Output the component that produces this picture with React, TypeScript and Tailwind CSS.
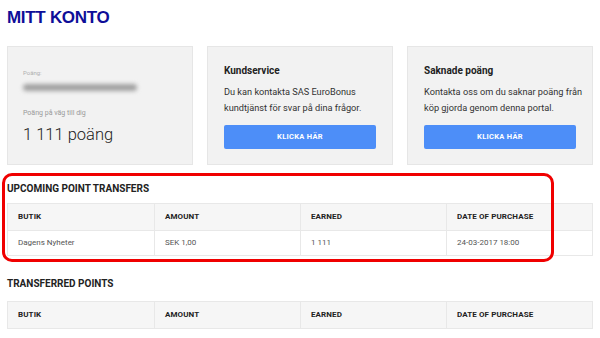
import React from "react";

const font = { fontFamily: 'Roboto, "Noto Sans", sans-serif' };

function Table({ rows }: { rows: string[][] }) {
  const cols = ["BUTIK", "AMOUNT", "EARNED", "DATE OF PURCHASE"];
  return (
    <div className="border border-[#e8e8e8]">
      <div className="grid grid-cols-4 bg-[#f6f6f6] h-[26px]">
        {cols.map((c, i) => (
          <div
            key={c}
            className={`flex items-center pl-[10px] text-[8px] font-bold text-[#222] tracking-[0.1px] ${i > 0 ? "border-l border-[#e8e8e8]" : ""}`}
          >
            {c}
          </div>
        ))}
      </div>
      {rows.map((r, ri) => (
        <div key={ri} className="grid grid-cols-4 bg-white h-[25px] border-t border-[#e8e8e8]">
          {r.map((c, i) => (
            <div
              key={i}
              className={`flex items-center pl-[10px] text-[8px] text-[#555] ${i > 0 ? "border-l border-[#e8e8e8]" : ""}`}
            >
              {c}
            </div>
          ))}
        </div>
      ))}
    </div>
  );
}

function InfoCard({ title, lines }: { title: string; lines: string[] }) {
  return (
    <div className="bg-[#f2f2f2] border border-[#e6e6e6] h-[119px] px-[16px] pt-[17px]">
      <div className="text-[10px] font-bold text-[#222] leading-[14px]">{title}</div>
      <div className="mt-[6px] text-[9.2px] text-[#333] leading-[16px] whitespace-nowrap">
        {lines.map((l) => (
          <div key={l}>{l}</div>
        ))}
      </div>
      <div className="mt-[9px] h-[24px] rounded-[2px] bg-[#4d8ef8] flex items-center justify-center text-white text-[7.5px] font-bold tracking-[0.3px]">
        KLICKA HÄR
      </div>
    </div>
  );
}

export default function App() {
  return (
    <div className="relative w-[600px] h-[338px] bg-white overflow-hidden px-[7px]" style={font}>
      <div className="pt-[8px] h-[46px]">
        <div
          className="text-[17px] leading-[20px] font-black text-[#0e0e98] tracking-[-0.3px]"
          style={{ fontFamily: '"Liberation Sans", Arial, sans-serif' }}
        >
          MITT KONTO
        </div>
      </div>
      <div className="grid grid-cols-3 gap-[14px]">
        <div className="bg-[#f2f2f2] border border-[#e6e6e6] h-[119px] px-[15px] pt-[22px]">
          <div className="text-[6px] text-[#b0b0b0] leading-[8px]">Poäng:</div>
          <div className="mt-[7px] h-[7px] w-[114px] bg-[#a0a0a0] rounded-full blur-[2px]" />
          <div className="mt-[17px] text-[7px] text-[#999] leading-[10px]">Poäng på väg till dig</div>
          <div className="mt-[7px] text-[16.5px] font-light text-[#222] leading-[20px]">1 111 poäng</div>
        </div>
        <InfoCard title="Kundservice" lines={["Du kan kontakta SAS EuroBonus", "kundtjänst för svar på dina frågor."]} />
        <InfoCard title="Saknade poäng" lines={["Kontakta oss om du saknar poäng från", "köp gjorda genom denna portal."]} />
      </div>
      <div className="mt-[11px] h-[24px] flex items-center text-[10px] font-bold text-[#222]">UPCOMING POINT TRANSFERS</div>
      <div className="mt-[3px]">
        <Table rows={[["Dagens Nyheter", "SEK 1,00", "1 111", "24-03-2017 18:00"]]} />
      </div>
      <div className="mt-[17px] h-[20px] flex items-center text-[10px] font-bold text-[#222]">TRANSFERRED POINTS</div>
      <div className="mt-[8px]">
        <Table rows={[]} />
      </div>
      <div className="absolute left-[2px] top-[173px] w-[552px] h-[89px] border-[3px] border-[#f00000] rounded-[10px]" />
    </div>
  );
}
